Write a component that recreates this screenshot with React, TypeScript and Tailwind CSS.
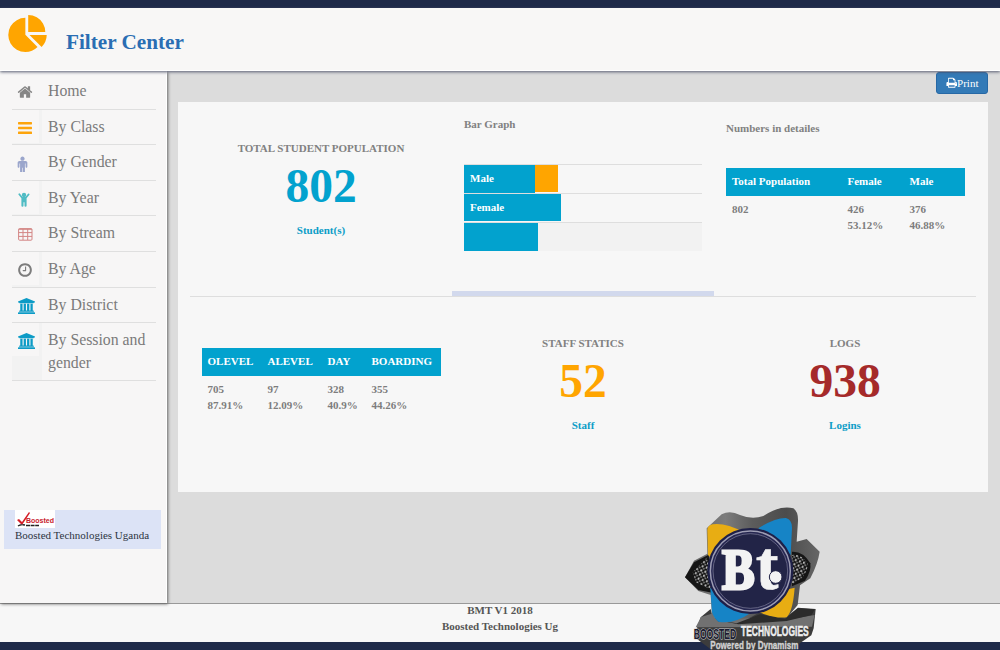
import type { ReactNode } from "react";

const SERIF = "font-['Liberation_Serif','Times_New_Roman',serif]";

function Glyph({ d, className, box = "0 0 1792 1792" }: { d: string; className: string; box?: string }) {
  return (
    <svg viewBox={box} className={className} fill="currentColor" aria-hidden="true">
      <path d={d} />
    </svg>
  );
}

const HOME =
  "M1472 992v480q0 26-19 45t-45 19h-384v-384h-256v384h-384q-26 0-45-19t-19-45v-480q0-1 .5-3t.5-3l575-474 575 474q1 2 1 6zm223-69l-62 74q-8 9-21 11h-3q-13 0-21-7l-692-577-692 577q-12 8-24 7-13-2-21-11l-62-74q-8-10-7-23.5t11-21.5l719-599q32-26 76-26t76 26l244 204v-195q0-14 9-23t23-9h192q14 0 23 9t9 23v408l219 182q10 8 11 21.5t-7 23.5z";
const PIE =
  "M768 890l546 546q-106 108-247.5 168t-298.5 60q-209 0-385.5-103t-279.5-279.5-103-385.5 103-385.5 279.5-279.5 385.5-103v762zm187 6h773q0 157-60 298.5t-168 247.5zm709-128h-768v-768q209 0 385.5 103t279.5 279.5 103 385.5z";
const MALE =
  "M1408 832v416q0 40-28 68t-68 28-68-28-28-68v-352h-64v912q0 46-33 79t-79 33-79-33-33-79v-464h-64v464q0 46-33 79t-79 33-79-33-33-79v-912h-64v352q0 40-28 68t-68 28-68-28-28-68v-416q0-80 56-136t136-56h640q80 0 136 56t56 136zm-288-448q0 93-65.500 158.500t-158.500 65.500-158.500-65.500-65.500-158.500 65.500-158.500 158.500-65.500 158.500 65.500 65.500 158.500z";
const CLOCK =
  "M1024 544v448q0 14-9 23t-23 9h-320q-14 0-23-9t-9-23v-64q0-14 9-23t23-9h224v-352q0-14 9-23t23-9h64q14 0 23 9t9 23zm416 352q0-148-73-273t-198-198-273-73-273 73-198 198-73 273 73 273 198 198 273 73 273-73 198-198 73-273zm224 0q0 209-103 385.5t-279.5 279.5-385.5 103-385.5-103-279.5-279.5-103-385.5 103-385.5 279.5-279.5 385.5-103 385.5 103 279.5 279.5 103 385.5z";
const PRINT =
  "M448 1536h896v-256h-896v256zm0-640h896v-384h-160q-40 0-68-28t-28-68v-160h-640v640zm1152 64q0-26-19-45t-45-19-45 19-19 45 19 45 45 19 45-19 19-45zm128 0v416q0 13-9.5 22.5t-22.5 9.5h-224v160q0 40-28 68t-68 28h-960q-40 0-68-28t-28-68v-160h-224q-13 0-22.5-9.5t-9.5-22.5v-416q0-79 56.5-135.5t135.5-56.5h64v-544q0-40 28-68t68-28h672q40 0 88 20t76 48l152 152q28 28 48 76t20 88v256h64q79 0 135.5 56.5t56.5 135.5z";
const BANK =
  "M960 0l960 384v128h-128q0 26-20.5 45t-48.5 19h-1526q-28 0-48.5-19t-20.5-45h-128v-128zm-704 640h256v768h128v-768h256v768h128v-768h256v768h128v-768h256v768h59q28 0 48.5 19t20.5 45v64h-1664v-64q0-26 20.5-45t48.5-19h59v-768zm1595 960q28 0 48.5 19t20.5 45v128h-1920v-128q0-26 20.5-45t48.5-19h1782z";

function Bars() {
  return (
    <svg viewBox="0 0 14 12" className="h-3 w-3.5 text-[#fda40b]" fill="currentColor">
      <rect width="14" height="2.400" rx="0.600" />
      <rect y="4.800" width="14" height="2.400" rx="0.600" />
      <rect y="9.600" width="14" height="2.400" rx="0.600" />
    </svg>
  );
}

function Child() {
  return (
    <svg viewBox="0 0 12 15" className="h-[15px] w-3 text-[#4fbcc4]" fill="currentColor">
      <circle cx="6" cy="3" r="2.200" />
      <path d="M.6 1.700a.9.900 0 0 1 1.400 0L4.600 4.900h2.800L10 1.700a.9.900 0 0 1 1.400 1.100L8.600 6.300v7.500a1 1 0 0 1-2.100 0v-3.500h-1v3.500a1 1 0 0 1-2.100 0V6.300L.6 2.800a.8.800 0 0 1 0-1.100z" />
    </svg>
  );
}

function Table() {
  return (
    <svg viewBox="0 0 15 13" className="h-[13px] w-[15px] text-[#d38584]" fill="none" stroke="currentColor">
      <rect x="0.600" y="0.600" width="13.400" height="11.600" rx="1" />
      <path d="M.5 1.300h13.500M.5 4.600h13.500M.5 8.400h13.500M5 1v11M9.700 1v11" />
    </svg>
  );
}

const menu: { label: string; icon: ReactNode; height: string; shade?: boolean }[] = [
  { label: "Home", icon: <Glyph d={HOME} className="-ml-px h-4 w-4 text-[#868686]" />, height: "h-[36px]" },
  { label: "By Class", icon: <Bars />, height: "h-[35px]", shade: true },
  { label: "By Gender", icon: <Glyph d={MALE} className="-ml-1 h-[17px] w-[17px] text-[#9ba6cc]" />, height: "h-[36px]" },
  { label: "By Year", icon: <Child />, height: "h-[35px]", shade: true },
  { label: "By Stream", icon: <Table />, height: "h-[36px]" },
  { label: "By Age", icon: <Glyph d={CLOCK} className="-ml-px h-[16px] w-[16px] text-[#7d7d7d]" />, height: "h-[36px]", shade: true },
  { label: "By District", icon: <Glyph d={BANK} box="0 0 1920 1792" className="h-4 w-[17px] text-[#0c9bc6]" />, height: "h-[35px]" },
  { label: "By Session and gender", icon: <Glyph d={BANK} box="0 0 1920 1792" className="h-4 w-[17px] text-[#0c9bc6]" />, height: "h-[58px]", shade: true },
];

function Sidebar() {
  return (
    <aside className="z-10 flex h-[532px] w-[167px] shrink-0 flex-col border-r border-white bg-[#f7f6f6] shadow-[1px_1px_3px_#666]">
      <ul className="ml-3 w-36 pt-[3px]">
        {menu.map((item) => (
          <li key={item.label} className={`flex border-b border-[#dfdfdf] ${item.height}`}>
            <div className={`flex w-[30px] shrink-0 flex-col ${item.shade ? "bg-[#f2f2f2]" : ""}`}>
              <div className="mr-[3px] flex h-[33px] items-center bg-[#f7f6f6] pt-[3px] pl-[5.5px]">
                <span className="block">{item.icon}</span>
              </div>
            </div>
            <span className="ml-1.5 pt-[5px] text-[15.8px] leading-[23px] text-[#7b7b7b]">{item.label}</span>
          </li>
        ))}
      </ul>
      <div className="mt-auto mb-[54px] ml-1 flex h-[39px] w-[157px] flex-col bg-[#dce3f6] pl-[11px]">
        <svg viewBox="0 0 40 18" className="h-[18px] w-10">
          <rect width="40" height="18" fill="#fff" />
          <path d="M2 10l2-1 3 3 7-10 1 1-8 12z" fill="#d51d27" />
          <text x="11" y="13" fontSize="7.500" fontWeight="700" textLength="28" lengthAdjust="spacingAndGlyphs" fontFamily="Liberation Sans, sans-serif" fill="#c8202c">Boosted</text>
          <path d="M3 16q3-2 7-1M11 15.500h13" stroke="#222" strokeWidth="1.500" strokeDasharray="4 .6" fill="none" />
        </svg>
        <span className="-mt-px text-[11px] leading-[17px] whitespace-nowrap text-[#2c3441]">Boosted Technologies Uganda</span>
      </div>
    </aside>
  );
}

function Stat({ title, value, unit, color, className }: { title: string; value: string; unit: string; color: string; className: string }) {
  return (
    <section className={`flex flex-col items-center ${className}`}>
      <h2 className="text-[11px] leading-4 text-[#818181]">{title}</h2>
      <strong className={`mt-[3px] text-[47.500px] leading-[54px] ${color}`}>{value}</strong>
      <span className="mt-[9px] text-[11px] leading-4 text-[#0c9dc7]">{unit}</span>
    </section>
  );
}

function DataTable({ columns, grid }: { columns: string[][]; grid: string }) {
  return (
    <div className="w-[239px] text-[11px]">
      <div className={`grid h-7 bg-[#02a2ce] pt-[5px] pl-1.5 leading-4 text-white ${grid}`}>
        {columns.map((c) => <span key={c[0]}>{c[0]}</span>)}
      </div>
      <div className={`grid pt-[5px] pl-1.5 leading-4 text-[#7d7d7d] ${grid}`}>
        {columns.map((c) => (
          <span key={c[0]} className="flex flex-col">
            <span>{c[1]}</span>
            <span>{c[2]}</span>
          </span>
        ))}
      </div>
    </div>
  );
}

function BarGraph() {
  return (
    <section className="w-[262px] pt-[14px] pl-3">
      <h2 className="text-[11px] leading-4 text-[#818181]">Bar Graph</h2>
      <div className="mt-8 w-[238px] text-[11px] text-white">
        <div className="flex h-[29px] border-t border-[#dedede]">
          <div className="flex h-[28px] w-[71px] items-center bg-[#02a2ce] pb-0.5 pl-1.5">Male</div>
          <div className="h-[27px] w-[23px] bg-[#ffa500]" />
        </div>
        <div className="flex h-[29px] border-t border-[#dedede]">
          <div className="flex h-[27px] w-[97px] items-center bg-[#02a2ce] pl-1.5">Female</div>
        </div>
        <div className="flex h-[29px] border-t border-[#dedede] bg-[#f2f2f2]">
          <div className="h-[28px] w-[74px] bg-[#02a2ce]" />
        </div>
      </div>
    </section>
  );
}

function BrandMark() {
  return (
    <svg viewBox="0 0 495 465" className="absolute top-[495px] left-[670px] z-20 h-[155px] w-[165px]">
      <defs>
        <linearGradient id="steel" x1="0" y1="0" x2="1" y2="0">
          <stop offset="0" stopColor="#626262" />
          <stop offset=".3" stopColor="#7c7c7c" />
          <stop offset=".5" stopColor="#5c5c5c" />
          <stop offset=".75" stopColor="#4c4c4c" />
          <stop offset="1" stopColor="#666" />
        </linearGradient>
        <pattern id="mesh" width="13" height="13" patternUnits="userSpaceOnUse" patternTransform="rotate(18)">
          <rect width="13" height="13" fill="#111" />
          <circle cx="3" cy="4" r="3.500" fill="#bbb" />
          <circle cx="9" cy="10" r="3" fill="#888" />
        </pattern>
      </defs>
      <path d="M110 100L155 58Q180 45 210 60Q246 75 280 63Q330 30 370 40Q385 50 384 78L380 140L410 132L449 170Q444 205 421 250L390 271L383 330L350 370L210 380L126 365L122 300L85 288L45 247L72 197L112 176Z" fill="url(#steel)" />
      <path d="M45 247L72 202L116 179L130 294L85 285Z" fill="#151515" />
      <path d="M68 232L112 186L125 285L78 262Z" fill="url(#mesh)" />
      <path d="M366 170Q400 168 421 205Q425 228 405 257L366 274Z" fill="#151515" />
      <path d="M366 180Q393 175 412 205Q416 225 395 250L366 268Z" fill="url(#mesh)" />
      <path d="M114 180L112 105Q112 92 128 88Q165 82 222 112L145 210Z" fill="#e8ad13" />
      <path d="M265 100Q315 68 348 69Q366 74 366 98L362 180Q320 145 265 100Z" fill="#1684c6" />
      <path d="M92 367L122 342L128 367L220 379L270 352L345 369L384 338L437 342L431 400L424 421L382 450L370 465H125L72 425Z" fill="#3c3c3c" />
      <path d="M93 366L125 356L145 380L245 368L345 375L434 360L426 395L77 397Z" fill="#717171" />
      <path d="M145 376L200 385L270 358L345 372L384 340L434 343L425 360L350 378L205 388Z" fill="#2b2b2b" />
      <path d="M121 280L126 352Q132 370 145 380Q190 390 245 352L170 270Z" fill="#1684c6" />
      <path d="M265 351Q315 371 350 367Q369 347 374 278L320 290Z" fill="#e8ad13" />
      <circle cx="241" cy="228" r="129" fill="#1e2048" />
      <circle cx="241" cy="228" r="120" fill="#252650" stroke="#9d9db4" strokeWidth="4.500" />
      <circle cx="241" cy="228" r="112" fill="#222447" stroke="#83839f" strokeWidth="2" />
      <g fill="#f3f3f3" stroke="#f3f3f3" fontFamily="Liberation Serif, serif" fontWeight="700">
        <text x="156" y="281" fontSize="168" strokeWidth="9" textLength="98" lengthAdjust="spacingAndGlyphs">B</text>
        <text x="257" y="283" fontSize="212" strokeWidth="2" textLength="68" lengthAdjust="spacingAndGlyphs">t</text>
      </g>
      <circle cx="317" cy="246" r="19" fill="#f3f3f3" stroke="#222447" strokeWidth="3" />
      <g fontFamily="Liberation Sans, sans-serif" fontWeight="700">
        <text x="71" y="431" fontSize="42" textLength="128" lengthAdjust="spacingAndGlyphs" fill="#1a1b30" stroke="#d2d2d2" strokeWidth="3.500" paintOrder="stroke">BOOSTED</text>
        <text x="213" y="424" fontSize="42" textLength="203" lengthAdjust="spacingAndGlyphs" fill="#eee" stroke="#eee" strokeWidth="1.500">TECHNOLOGIES</text>
        <text x="121" y="462" fontSize="30" textLength="264" lengthAdjust="spacingAndGlyphs" fill="#d2d2d2" stroke="#d2d2d2" strokeWidth="1">Powered by Dynamism</text>
      </g>
    </svg>
  );
}

export default function App() {
  return (
    <div className={`relative flex h-[650px] w-[1000px] flex-col overflow-hidden bg-[#dcdcdc] ${SERIF}`}>
      <div className="h-2 shrink-0 bg-[#1f2a49]" />
      <header className="z-20 flex h-[63px] shrink-0 border-b border-white bg-[#f8f7f6] shadow-[0_1px_3px_#555b70]">
        <Glyph d={PIE} box="0 0 1728 1664" className="mt-[7px] ml-[7.500px] h-[37px] w-[39px] text-[#ffa500]" />
        <h1 className="mt-[22px] ml-[19.500px] text-[21.200px] leading-6 font-bold text-[#2a6eb3]">Filter Center</h1>
      </header>
      <div className="flex h-[532px] shrink-0">
        <Sidebar />
        <main className="flex flex-1 flex-col pr-3 pl-[11px]">
          <button className="mt-[1px] flex h-[22px] w-[52px] items-center justify-center self-end rounded-[3px] border border-[#2768a5] bg-[#337ab7] text-[11px] text-white">
            <Glyph d={PRINT} className="h-[11.500px] w-[11.500px]" />
            <span>Print</span>
          </button>
          <div className="mt-2 h-[390px] w-[810px] bg-[#f7f7f7] px-3 font-bold">
            <div className="flex h-[195px] border-b border-[#dedede]">
              <Stat title="TOTAL STUDENT POPULATION" value="802" unit="Student(s)" color="text-[#02a2ce]" className="w-[262px] pt-[38px]" />
              <div className="flex flex-col justify-between">
                <BarGraph />
                <div className="h-[5px] w-[262px] bg-[#d2d9ed]" />
              </div>
              <section className="w-[262px] pt-[18px] pl-3">
                <h2 className="text-[11px] leading-4 text-[#818181]">Numbers in detailes</h2>
                <div className="mt-8">
                  <DataTable grid="grid-cols-[115.5px_62px_1fr]" columns={[["Total Population", "802", ""], ["Female", "426", "53.12%"], ["Male", "376", "46.88%"]]} />
                </div>
              </section>
            </div>
            <div className="flex">
              <section className="w-[262px] pt-[51px] pl-[11.500px]">
                <DataTable grid="grid-cols-[60px_60px_44px_1fr]" columns={[["OLEVEL", "705", "87.91%"], ["ALEVEL", "97", "12.09%"], ["DAY", "328", "40.9%"], ["BOARDING", "355", "44.26%"]]} />
              </section>
              <Stat title="STAFF STATICS" value="52" unit="Staff" color="text-[#ffa500]" className="w-[262px] pt-[38px]" />
              <Stat title="LOGS" value="938" unit="Logins" color="text-[#a52a2a]" className="w-[262px] pt-[38px]" />
            </div>
          </div>
        </main>
      </div>
      <footer className="flex h-[39px] shrink-0 flex-col items-center border-t border-[#999] bg-[#f7f7f7] text-[11px] leading-4 font-bold text-[#555]">
        <span className="-mt-0.5">BMT V1 2018</span>
        <span>Boosted Technologies Ug</span>
      </footer>
      <div className="h-2 shrink-0 bg-[#1f2a49]" />
      <BrandMark />
    </div>
  );
}
